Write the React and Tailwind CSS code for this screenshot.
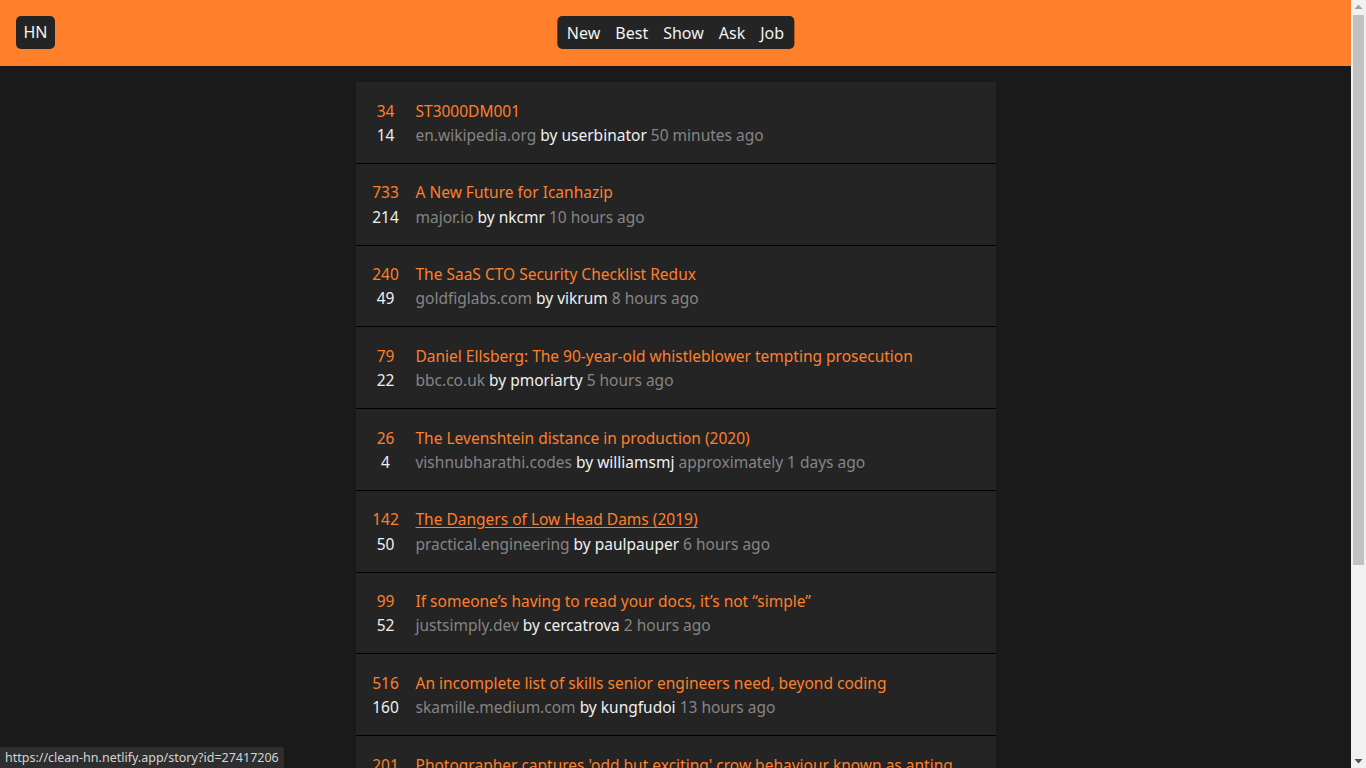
import React from "react";

const items = [
  { score: 34, comments: 14, title: "ST3000DM001", domain: "en.wikipedia.org", user: "userbinator", time: "50 minutes ago" },
  { score: 733, comments: 214, title: "A New Future for Icanhazip", domain: "major.io", user: "nkcmr", time: "10 hours ago" },
  { score: 240, comments: 49, title: "The SaaS CTO Security Checklist Redux", domain: "goldfiglabs.com", user: "vikrum", time: "8 hours ago" },
  { score: 79, comments: 22, title: "Daniel Ellsberg: The 90-year-old whistleblower tempting prosecution", domain: "bbc.co.uk", user: "pmoriarty", time: "5 hours ago" },
  { score: 26, comments: 4, title: "The Levenshtein distance in production (2020)", domain: "vishnubharathi.codes", user: "williamsmj", time: "approximately 1 days ago" },
  { score: 142, comments: 50, title: "The Dangers of Low Head Dams (2019)", domain: "practical.engineering", user: "paulpauper", time: "6 hours ago", hover: true },
  { score: 99, comments: 52, title: "If someone\u2019s having to read your docs, it\u2019s not \u201csimple\u201d", domain: "justsimply.dev", user: "cercatrova", time: "2 hours ago" },
  { score: 516, comments: 160, title: "An incomplete list of skills senior engineers need, beyond coding", domain: "skamille.medium.com", user: "kungfudoi", time: "13 hours ago" },
  { score: 201, comments: 63, title: "Photographer captures 'odd but exciting' crow behaviour known as anting", domain: "bbc.com", user: "pseudolus", time: "9 hours ago" },
  { score: 88, comments: 31, title: "Show HN: A tiny static site generator", domain: "github.com", user: "jdoe", time: "4 hours ago" },
  { score: 57, comments: 12, title: "Notes on building a small search engine", domain: "example.org", user: "marcel", time: "7 hours ago" },
  { score: 120, comments: 40, title: "Why the terminal is still the best IDE", domain: "blog.dev", user: "tjk", time: "11 hours ago" },
];

export default function App() {
  return (
    <div
      className="min-h-screen bg-[#1a1a1a] text-[15.5px]"
      style={{ fontFamily: "'Noto Sans', 'Open Sans', sans-serif" }}
    >
      <div className="w-[1351px]">
        <header className="h-[66px] bg-[#ff7f2a] flex items-start pt-4 px-4 relative">
          <div className="h-[33px] px-[7.5px] rounded-[5px] bg-[#242424] text-[#f2f2f2] text-[16px] leading-[33px]">HN</div>
          <nav className="absolute left-1/2 -translate-x-1/2 top-4 h-[33px] rounded-[5px] bg-[#242424] flex items-center gap-[15px] px-[10px] text-[16px] text-[#f2f2f2]">
            <span>New</span>
            <span>Best</span>
            <span>Show</span>
            <span>Ask</span>
            <span>Job</span>
          </nav>
        </header>
        <main className="w-[640px] mx-auto mt-4 pb-[100px]">
          {items.map((it, i) => (
            <div key={i} className="bg-[#242424] border-b border-black flex pt-[16.5px] pb-[15.5px] leading-[24.375px]">
              <div className="w-[60px] flex flex-col items-center">
                <span className="text-[#ff7f2a]">{it.score}</span>
                <span className="text-[#f0f0f0]">{it.comments}</span>
              </div>
              <div className="flex flex-col">
                <span className={"text-[#ff7f2a] " + (it.hover ? "underline underline-offset-2" : "")}>{it.title}</span>
                <span className="text-[#858585]">
                  {it.domain} <span className="text-[#f0f0f0]">by {it.user}</span> {it.time}
                </span>
              </div>
            </div>
          ))}
        </main>
      </div>
      <div className="fixed left-0 bottom-0 h-[21px] px-[5px] bg-[#2e2e2e] text-[#d4d4d4] text-[12.5px] leading-[21px] rounded-tr-[3px]">
        https://clean-hn.netlify.app/story?id=27417206
      </div>
      <div className="fixed right-0 top-0 w-[15px] h-screen bg-[#f1f1f1]">
        <svg className="absolute left-0 top-0" width="15" height="15" viewBox="0 0 15 15">
          <path d="M3.5 9 L7.5 4.5 L11.5 9 Z" fill="#a3a3a3" />
        </svg>
        <div className="absolute left-[2px] top-[15px] w-[11px] h-[550px] bg-[#c1c1c1]"></div>
        <svg className="absolute left-0 bottom-0" width="15" height="15" viewBox="0 0 15 15">
          <path d="M3.5 6 L7.5 10.5 L11.5 6 Z" fill="#505050" />
        </svg>
      </div>
    </div>
  );
}
